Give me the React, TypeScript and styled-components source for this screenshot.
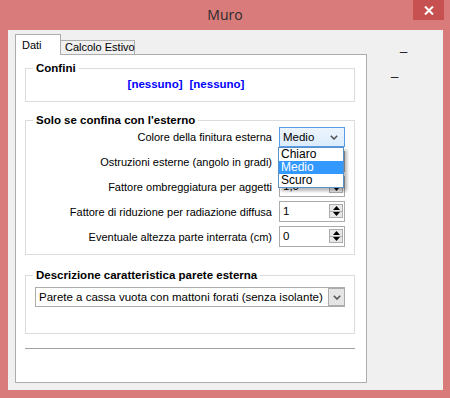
import React from "react";
import styled, { createGlobalStyle } from "styled-components";

const FRAME = "#D97B7B";
const LINE = "#ADADAD";

const GlobalStyle = createGlobalStyle`
  html, body {
    margin: 0;
    padding: 0;
  }
  body {
    width: 450px;
    height: 398px;
    overflow: hidden;
    background: ${FRAME};
    font-family: "Liberation Sans", Arial, sans-serif;
    font-size: 11px;
    color: #000;
  }
  * {
    box-sizing: border-box;
  }
`;

const Window = styled.div`
  width: 450px;
  height: 398px;
  display: flex;
  flex-direction: column;
  background: ${FRAME};
`;

const TitleBar = styled.div`
  height: 30px;
  flex: none;
  display: grid;
  grid-template-columns: 1fr auto 1fr;
  align-items: start;
`;

const Title = styled.div`
  grid-column: 2;
  font-family: "Open Sans", "Liberation Sans", sans-serif;
  font-size: 14px;
  line-height: 29px;
  color: #2b2b2b;
`;

const CloseButton = styled.div`
  grid-column: 3;
  justify-self: end;
  margin-right: 6px;
  width: 31px;
  height: 20px;
  background: #c75050;
  display: flex;
  align-items: center;
  justify-content: center;
`;

const Client = styled.div`
  margin: 0 7px 8px 8px;
  height: 360px;
  background: #f0f0f0;
  display: flex;
  padding: 4px 0 0 7px;
`;

const TabControl = styled.div`
  width: 352px;
  display: flex;
  flex-direction: column;
`;

const TabStrip = styled.div`
  height: 20px;
  display: flex;
  align-items: flex-end;
`;

const Tab = styled.div<{ $active?: boolean }>`
  position: relative;
  border: 1px solid ${LINE};
  border-bottom: none;
  white-space: nowrap;
  ${({ $active }) =>
    $active
      ? `
    width: 46px;
    height: 21px;
    margin-bottom: -1px;
    padding: 3px 0 0 6px;
    line-height: 14px;
    background: #fff;
    z-index: 1;
  `
      : `
    width: 75px;
    height: 14px;
    margin-left: -1px;
    padding: 0 0 0 4px;
    line-height: 13px;
    background: #f0f0f0;
  `}
`;

const Panel = styled.div`
  height: 329px;
  border: 1px solid ${LINE};
  background: #fff;
  padding: 6px 11px 0 9px;
  display: flex;
  flex-direction: column;
`;

const Group = styled.fieldset<{ $top?: number; $pt?: number; $pb?: number }>`
  margin: ${({ $top = 0 }) => $top}px 0 0 0;
  min-width: 0;
  border: 1px solid #dcdcdc;
  padding: ${({ $pt = 0 }) => $pt}px 9px ${({ $pb = 0 }) => $pb}px 9px;
`;

const Legend = styled.legend`
  font-weight: bold;
  font-size: 11.5px;
  line-height: 14px;
  padding: 0 3px;
  margin-left: -2px;
`;

const LinkLine = styled.div`
  display: flex;
  justify-content: center;
  gap: 7px;
  padding-right: 8px;
  line-height: 14px;
`;

const Link = styled.span`
  color: #0000ff;
  font-weight: bold;
  font-size: 11.5px;
`;

const Rows = styled.div`
  display: flex;
  flex-direction: column;
  gap: 4px;
`;

const Row = styled.div<{ $h: number }>`
  height: ${({ $h }) => $h}px;
  display: flex;
  justify-content: flex-end;
  align-items: center;
  gap: 7px;
  white-space: nowrap;
`;

const Label = styled.span`
  line-height: 14px;
`;

const ComboWrap = styled.div`
  position: relative;
`;

const Combo = styled.div<{ $open?: boolean; $w: number }>`
  width: ${({ $w }) => $w}px;
  height: 20px;
  border: 1px solid ${({ $open }) => ($open ? "#569de5" : "#acacac")};
  background: ${({ $open }) =>
    $open ? "linear-gradient(#ecf4fc, #dcecfc)" : "#fff"};
  display: flex;
  align-items: center;
  font-size: 11.5px;
`;

const ComboText = styled.span`
  flex: 1;
  padding-left: 3px;
  white-space: nowrap;
  overflow: hidden;
`;

const ComboArrow = styled.div<{ $boxed?: boolean }>`
  width: ${({ $boxed }) => ($boxed ? 17 : 16)}px;
  height: ${({ $boxed }) => ($boxed ? 20 : 18)}px;
  margin-right: ${({ $boxed }) => ($boxed ? -1 : 2)}px;
  display: flex;
  align-items: center;
  justify-content: center;
  ${({ $boxed }) =>
    $boxed
      ? `
    background: #e5e5e5;
    border: 1px solid #acacac;
    border-top: 2px solid #acacac;
    border-bottom: 2px solid #acacac;
  `
      : ""}
`;

const DropList = styled.div`
  position: absolute;
  top: 20px;
  left: -1px;
  width: 66px;
  border: 1px solid #5b8fc7;
  background: #fff;
  box-shadow: 3px 3px 3px rgba(0, 0, 0, 0.28);
  z-index: 5;
`;

const Option = styled.div<{ $selected?: boolean }>`
  height: 13px;
  line-height: 13px;
  padding-left: 2px;
  font-size: 12px;
  background: ${({ $selected }) => ($selected ? "#3399ff" : "transparent")};
  color: ${({ $selected }) => ($selected ? "#fff" : "#000")};
`;

const SpinBox = styled.div`
  width: 66px;
  height: 21px;
  border: 1px solid #ababab;
  background: #fff;
  display: flex;
  align-items: center;
  padding: 0 1px 1px 3px;
`;

const SpinValue = styled.span`
  flex: 1;
  font-size: 11.5px;
`;

const Spinner = styled.div`
  width: 14px;
  height: 14px;
  display: flex;
  flex-direction: column;
`;

const SpinButton = styled.div`
  flex: 1;
  border: 1px solid #acacac;
  background: #e8e8e8;
  display: flex;
  align-items: center;
  justify-content: center;
  & + & {
    margin-top: -1px;
  }
`;

const Separator = styled.div`
  margin-top: 14px;
  height: 1px;
  background: #a0a0a0;
`;

const Side = styled.div`
  flex: 1;
  display: flex;
  flex-direction: column;
  padding-top: 5px;
`;

const Mark = styled.span<{ $indent: number; $top?: number }>`
  margin-left: ${({ $indent }) => $indent}px;
  margin-top: ${({ $top = 0 }) => $top}px;
  font-size: 13px;
  line-height: 14px;
`;

const Chevron = () => (
  <svg width="8" height="5" viewBox="0 0 8 5">
    <path d="M0.8 0.8 L4 4 L7.2 0.8" fill="none" stroke="#555" strokeWidth="1.6" />
  </svg>
);

const Triangle = ({ up }: { up?: boolean }) => (
  <svg width="7" height="4" viewBox="0 0 7 4">
    <path d={up ? "M0 4 L3.5 0 L7 4 Z" : "M0 0 L3.5 4 L7 0 Z"} fill="#000" />
  </svg>
);

const NumberField = ({ value }: { value: string }) => (
  <SpinBox>
    <SpinValue>{value}</SpinValue>
    <Spinner>
      <SpinButton>
        <Triangle up />
      </SpinButton>
      <SpinButton>
        <Triangle />
      </SpinButton>
    </Spinner>
  </SpinBox>
);

const finiture = ["Chiaro", "Medio", "Scuro"];

export default function App() {
  const [finitura] = React.useState("Medio");

  return (
    <Window>
      <GlobalStyle />
      <TitleBar>
        <Title>Muro</Title>
        <CloseButton>
          <svg width="10" height="9" viewBox="0 0 10 9">
            <path d="M1 0.5 L9 8.5 M9 0.5 L1 8.5" stroke="#fff" strokeWidth="2" />
          </svg>
        </CloseButton>
      </TitleBar>
      <Client>
        <TabControl>
          <TabStrip>
            <Tab $active>Dati</Tab>
            <Tab>Calcolo Estivo</Tab>
          </TabStrip>
          <Panel>
            <Group $pt={2} $pb={10}>
              <Legend>Confini</Legend>
              <LinkLine>
                <Link>[nessuno]</Link>
                <Link>[nessuno]</Link>
              </LinkLine>
            </Group>

            <Group $top={11} $pb={7}>
              <Legend>Solo se confina con l'esterno</Legend>
              <Rows>
                <Row $h={20}>
                  <Label>Colore della finitura esterna</Label>
                  <ComboWrap>
                    <Combo $open $w={66}>
                      <ComboText>{finitura}</ComboText>
                      <ComboArrow>
                        <Chevron />
                      </ComboArrow>
                    </Combo>
                    <DropList>
                      {finiture.map((f) => (
                        <Option key={f} $selected={f === finitura}>
                          {f}
                        </Option>
                      ))}
                    </DropList>
                  </ComboWrap>
                </Row>
                <Row $h={21}>
                  <Label>Ostruzioni esterne (angolo in gradi)</Label>
                  <NumberField value="" />
                </Row>
                <Row $h={21}>
                  <Label>Fattore ombreggiatura per aggetti</Label>
                  <NumberField value="1,0" />
                </Row>
                <Row $h={21}>
                  <Label>Fattore di riduzione per radiazione diffusa</Label>
                  <NumberField value="1" />
                </Row>
                <Row $h={21}>
                  <Label>Eventuale altezza parte interrata (cm)</Label>
                  <NumberField value="0" />
                </Row>
              </Rows>
            </Group>

            <Group $top={13} $pt={5} $pb={26}>
              <Legend>Descrizione caratteristica parete esterna</Legend>
              <Combo $w={310}>
                <ComboText>Parete a cassa vuota con mattoni forati (senza isolante)</ComboText>
                <ComboArrow $boxed>
                  <Chevron />
                </ComboArrow>
              </Combo>
            </Group>

            <Separator />
          </Panel>
        </TabControl>
        <Side>
          <Mark $indent={33}>_</Mark>
          <Mark $indent={24} $top={11}>
            _
          </Mark>
        </Side>
      </Client>
    </Window>
  );
}
